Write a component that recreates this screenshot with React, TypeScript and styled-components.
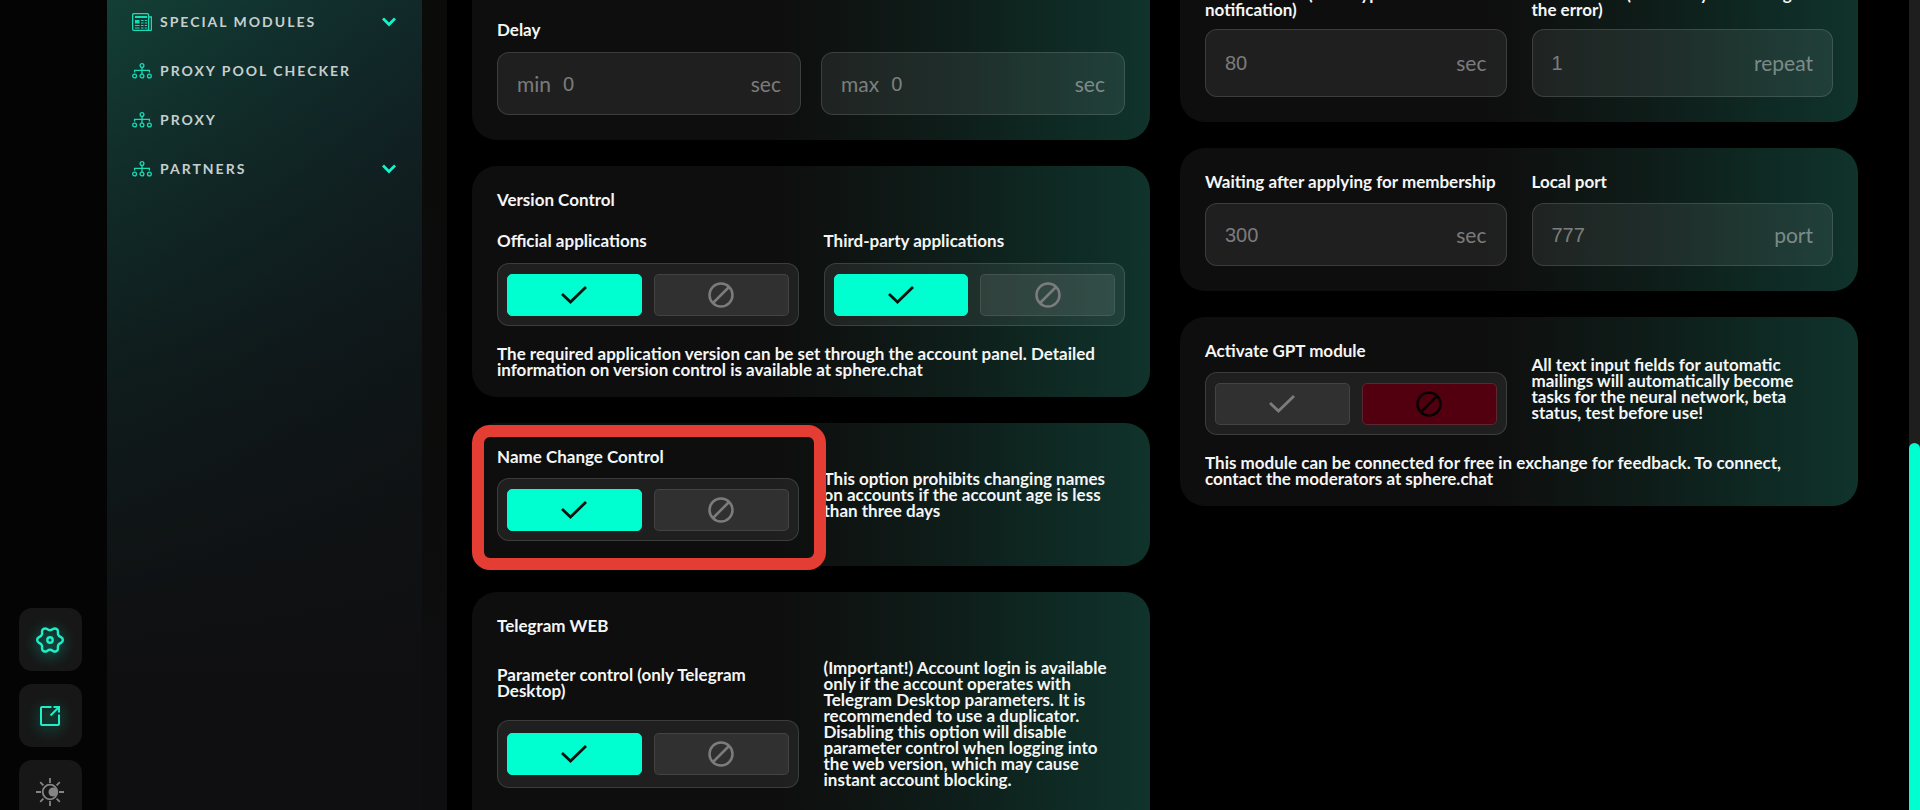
import React, { useId, useState } from 'react';
import styled, { createGlobalStyle, css } from 'styled-components';

const ACCENT = '#00ffd0';

const GlobalStyle = createGlobalStyle`
  *, *::before, *::after { box-sizing: border-box; }
  body { margin: 0; background: #000; color: #f4f6f6; font-family: Lato, "Liberation Sans", sans-serif; }
  button, input { font: inherit; color: inherit; }
  h2, h3, p, ul { margin: 0; padding: 0; }
`;

const Page = styled.div`
  display: flex;
  height: 100vh;
  overflow: hidden;
`;

const Rail = styled.aside`
  flex: 0 0 107px;
  display: flex;
  flex-direction: column;
  justify-content: flex-end;
  align-items: flex-start;
  gap: 13px;
  padding-left: 19px;
  margin-bottom: -13px;
  background: #040404;
`;

const RailButton = styled.button<{ $active?: boolean }>`
  flex: none;
  display: grid;
  place-items: center;
  width: 63px;
  height: 63px;
  padding: 0 1px 0 0;
  border: 0;
  border-radius: 13px;
  background: #171717;
  color: ${p => (p.$active ? '#1df0c8' : '#858585')};
  ${p =>
    p.$active &&
    css`
      svg {
        overflow: visible;
        filter: drop-shadow(0 3px 7px rgba(0, 255, 208, 0.6));
      }
    `}
`;

const Sidebar = styled.nav`
  flex: 0 0 340px;
  padding-right: 25px;
  background: linear-gradient(180deg, #0b0b0a 0%, #0c0c0c 60%, #0e0e10 85%);
`;

const Menu = styled.ul`
  height: 100%;
  list-style: none;
  background:
    linear-gradient(180deg, rgba(14, 14, 16, 0) 0%, rgba(14, 14, 16, 0.6) 45%, #0f0f11 84%),
    linear-gradient(112deg, #133f36 0%, #11312e 30%, #112628 55%, #101c1c 85%);
`;

const MenuLink = styled.a`
  display: flex;
  align-items: center;
  gap: 8px;
  height: 49px;
  padding: 0 26px 0 25px;
  color: #c6cece;
  font-size: 14px;
  font-weight: 700;
  letter-spacing: 2px;
  text-decoration: none;
  text-transform: uppercase;

  li:first-child > & { height: 46px; padding-bottom: 3px; }
  svg { flex: none; color: #17dcb5; }
  svg:last-child { color: #12f5cb; }
`;

const MenuText = styled.span`
  flex: 1;
`;

const Content = styled.main`
  flex: 1;
  min-width: 0;
  display: grid;
  grid-template-columns: repeat(2, minmax(0, 1fr));
  align-items: start;
  gap: 30px;
  padding: 0 51px 0 25px;
`;

const Column = styled.div<{ $scrolled: number }>`
  display: flex;
  flex-direction: column;
  gap: 26px;
  margin-top: -${p => p.$scrolled}px;
`;

const endPadding = { note: 19, field: 25, page: 50 };

const Card = styled.section<{ $end?: keyof typeof endPadding; $cut?: boolean }>`
  position: relative;
  padding: 26px 25px ${p => endPadding[p.$end ?? 'field']}px;
  border-radius: ${p => (p.$cut ? '0 0 25px 25px' : '25px')};
  background: linear-gradient(90deg, #0e0e0e 0%, #0e0e0e 45%, #0e1d19 70%, #0f2f28 94%, #10332b 100%);
`;

const Heading = styled.h2`
  margin-bottom: 25px;
  font-size: 17px;
  font-weight: 700;
  line-height: 16px;
`;

const Label = styled.label<{ $gap?: number }>`
  display: block;
  margin-bottom: ${p => p.$gap ?? 14}px;
  font-size: 17px;
  font-weight: 700;
  line-height: 16px;
`;

const Note = styled.p<{ $below?: boolean }>`
  margin-top: ${p => (p.$below ? 20 : 0)}px;
  font-size: 17px;
  font-weight: 700;
  line-height: 16px;
`;

const Pair = styled.div<{ $gap?: number }>`
  display: grid;
  grid-template-columns: repeat(2, minmax(0, 1fr));
  align-items: center;
  gap: ${p => p.$gap ?? 25}px;
`;

const Spaced = styled.div`
  padding-top: 8px;
`;

const Box = styled.div<{ $tall?: boolean }>`
  display: flex;
  align-items: center;
  height: ${p => (p.$tall ? 68 : 63)}px;
  padding: 0 19px;
  border: 1px solid rgba(255, 255, 255, 0.13);
  border-radius: 12px;
  background: rgba(255, 255, 255, 0.075);
  color: rgba(255, 255, 255, 0.42);
  font-size: 21px;
  line-height: 24px;
`;

const Prefix = styled.label`
  margin-right: 12px;
`;

const NumberInput = styled.input`
  flex: 1;
  min-width: 0;
  padding: 0;
  border: 0;
  outline: 0;
  background: none;
  font-family: 'Liberation Sans', sans-serif;
  font-size: 20px;
  &::placeholder { color: rgba(255, 255, 255, 0.42); opacity: 1; }
`;

const ToggleBox = styled(Box)`
  gap: 12px;
  padding: 0 9px;
`;

const tones = {
  idle: css`background: rgba(255, 255, 255, 0.08); border-color: rgba(255, 255, 255, 0.09); color: #7c7c7d;`,
  yes: css`background: ${ACCENT}; border-color: ${ACCENT}; color: #041310;`,
  no: css`background: #52000f; border-color: #5b2730; color: #080002;`,
};

const ToggleButton = styled.button<{ $tone: keyof typeof tones }>`
  flex: 1;
  display: grid;
  place-items: center;
  height: 42px;
  padding: 0;
  border: 1px solid;
  border-radius: 5px;
  ${p => tones[p.$tone]}
`;

const Highlight = styled.div`
  position: absolute;
  top: 2px;
  left: 0;
  width: calc(50% + 15px);
  height: 145px;
  border: 12px solid #e33d34;
  border-radius: 18px;
  pointer-events: none;
`;

const ScrollTrack = styled.div`
  flex: 0 0 11px;
  display: flex;
  flex-direction: column;
  justify-content: flex-end;
  background: #1e1e1f;
`;

const ScrollThumb = styled.div`
  height: 45.3%;
  border-radius: 6px 6px 0 0;
  background: ${ACCENT};
`;

const polar = (deg: number, r: number) => {
  const a = (deg * Math.PI) / 180;
  return [14 + r * Math.cos(a), 14 + r * Math.sin(a)];
};

// Six-lobed outline, smoothed by running each curve through the edge midpoints.
const gearPath = (() => {
  const pts: number[][] = [];
  for (let a = 0; a < 360; a += 60) pts.push(polar(a - 9, 13), polar(a + 9, 13), polar(a + 22, 9.8), polar(a + 38, 9.8));
  const mid = (i: number) => {
    const p = pts[i % pts.length];
    const q = pts[(i + 1) % pts.length];
    return `${((p[0] + q[0]) / 2).toFixed(2)} ${((p[1] + q[1]) / 2).toFixed(2)}`;
  };
  return `M${mid(pts.length - 1)}` + pts.map((p, i) => `Q${p[0].toFixed(2)} ${p[1].toFixed(2)} ${mid(i)}`).join('') + 'Z';
})();

const GearIcon = () => (
  <svg width="28" height="28" viewBox="0 0 28 28" fill="none" stroke="currentColor" strokeWidth="2.4">
    <path d={gearPath} strokeLinejoin="round" />
    <circle cx="14" cy="14" r="2.7" />
  </svg>
);

const OpenIcon = () => (
  <svg width="20" height="20" viewBox="0 0 20 20" fill="none" stroke="currentColor" strokeWidth="2">
    <path d="M11.5 1H2a1 1 0 0 0-1 1v16a1 1 0 0 0 1 1h16a1 1 0 0 0 1-1V8.5" />
    <path d="M10.5 9.5 18.5 1.5M13.5 1H19v5.5" />
  </svg>
);

const ThemeIcon = () => (
  <svg width="28" height="28" viewBox="0 0 28 28" fill="none" stroke="currentColor" strokeWidth="1.8">
    <circle cx="14" cy="14" r="7.3" />
    <circle cx="17" cy="14" r="4.5" fill="currentColor" stroke="none" />
    <path d="M14 0v5M14 23v5M0 14h5M23 14h5M4.2 4.2l3.2 3.2M20.6 20.6l3.2 3.2M4.2 23.8l3.2-3.2M20.6 7.4l3.2-3.2" />
  </svg>
);

const NewsIcon = () => (
  <svg width="20" height="18" viewBox="0 0 20 18" fill="none" stroke="currentColor">
    <rect x=".6" y=".6" width="16" height="16.8" rx="1.5" strokeWidth="1.3" />
    <path d="M17 4h2.4v12.4a1 1 0 0 1-1 1H15" strokeWidth="1.3" />
    <rect x="3" y="3" width="12" height="2" fill="currentColor" stroke="none" />
    <rect x="3" y="7" width="4.5" height="3.5" fill="currentColor" stroke="none" />
    <path d="M9 7.5h2.5M12.7 7.5H15M9 10h2.5M12.7 10H15M3 12.5h4.5M9 12.5h2.5M12.7 12.5H15M3 15h4.5M9 15h2.5M12.7 15H15" />
  </svg>
);

const NetworkIcon = () => (
  <svg width="20" height="16" viewBox="0 0 20 16" fill="none" stroke="currentColor" strokeWidth="1.3">
    <circle cx="10" cy="2.6" r="1.9" />
    <circle cx="2.6" cy="13" r="1.9" />
    <circle cx="10" cy="13" r="1.9" />
    <circle cx="17.4" cy="13" r="1.9" />
    <path d="M10 4.6V11M2.6 9.5V7.4h14.8v2.1" />
  </svg>
);

const ChevronIcon = () => (
  <svg width="14" height="10" viewBox="0 0 14 10" fill="none" stroke="currentColor" strokeWidth="2.7">
    <path d="M1 1.5 7 7.5 13 1.5" />
  </svg>
);

const CheckIcon = () => (
  <svg width="26" height="18" viewBox="0 0 26 18" fill="none" stroke="currentColor" strokeWidth="2.8">
    <path d="M1 8 9.5 16 25 1" />
  </svg>
);

const BanIcon = () => (
  <svg width="26" height="26" viewBox="0 0 26 26" fill="none" stroke="currentColor" strokeWidth="2.5">
    <circle cx="13" cy="13" r="11.5" />
    <path d="M5 21 21 5" />
  </svg>
);

type FieldProps = { label: string; placeholder: string; unit: string; labelGap?: number; tall?: boolean };

function Field({ label, placeholder, unit, labelGap = 13, tall }: FieldProps) {
  const id = useId();
  return (
    <div>
      <Label htmlFor={id} $gap={labelGap}>{label}</Label>
      <Box $tall={tall}>
        <NumberInput id={id} placeholder={placeholder} />
        <span>{unit}</span>
      </Box>
    </div>
  );
}

function BoundField({ bound }: { bound: string }) {
  const id = useId();
  return (
    <Box>
      <Prefix htmlFor={id}>{bound}</Prefix>
      <NumberInput id={id} placeholder="0" />
      <span>sec</span>
    </Box>
  );
}

type ToggleProps = { label: string; initial?: boolean; labelGap?: number; tall?: boolean };

function Toggle({ label, initial = true, labelGap, tall }: ToggleProps) {
  const id = useId();
  const [on, setOn] = useState(initial);
  return (
    <div>
      <Label as="h3" id={id} $gap={labelGap}>{label}</Label>
      <ToggleBox role="group" aria-labelledby={id} $tall={tall}>
        <ToggleButton type="button" aria-label="Enable" aria-pressed={on} $tone={on ? 'yes' : 'idle'} onClick={() => setOn(true)}>
          <CheckIcon />
        </ToggleButton>
        <ToggleButton type="button" aria-label="Disable" aria-pressed={!on} $tone={on ? 'idle' : 'no'} onClick={() => setOn(false)}>
          <BanIcon />
        </ToggleButton>
      </ToggleBox>
    </div>
  );
}

const menu = [
  { text: 'Special modules', icon: <NewsIcon />, nested: true },
  { text: 'Proxy pool checker', icon: <NetworkIcon />, nested: false },
  { text: 'Proxy', icon: <NetworkIcon />, nested: false },
  { text: 'Partners', icon: <NetworkIcon />, nested: true },
];

export default function App() {
  return (
    <Page>
      <GlobalStyle />
      <Rail>
        <RailButton type="button" aria-label="Settings" $active><GearIcon /></RailButton>
        <RailButton type="button" aria-label="Open in new window" $active><OpenIcon /></RailButton>
        <RailButton type="button" aria-label="Theme"><ThemeIcon /></RailButton>
      </Rail>

      <Sidebar>
        <Menu>
          {menu.map(item => (
            <li key={item.text}>
              <MenuLink href="#">
                {item.icon}
                <MenuText>{item.text}</MenuText>
                {item.nested && <ChevronIcon />}
              </MenuLink>
            </li>
          ))}
        </Menu>
      </Sidebar>

      <Content>
        <Column $scrolled={4}>
          <Card $cut>
            <Label as="h3">Delay</Label>
            <Pair $gap={20}>
              <BoundField bound="min" />
              <BoundField bound="max" />
            </Pair>
          </Card>

          <Card $end="note">
            <Heading>Version Control</Heading>
            <Pair>
              <Toggle label="Official applications" />
              <Toggle label="Third-party applications" />
            </Pair>
            <Note $below>
              The required application version can be set through the account panel. Detailed information on version
              control is available at sphere.chat
            </Note>
          </Card>

          <Card>
            <Pair>
              <Toggle label="Name Change Control" labelGap={13} />
              <Note>This option prohibits changing names on accounts if the account age is less than three days</Note>
            </Pair>
            <Highlight />
          </Card>

          <Card $end="page">
            <Heading>Telegram WEB</Heading>
            <Pair>
              <Spaced>
                <Toggle label="Parameter control (only Telegram Desktop)" labelGap={21} tall />
              </Spaced>
              <Note>
                (Important!) Account login is available only if the account operates with Telegram Desktop parameters.
                It is recommended to use a duplicator. Disabling this option will disable parameter control when
                logging into the web version, which may cause instant account blocking.
              </Note>
            </Pair>
          </Card>
        </Column>

        <Column $scrolled={40}>
          <Card $cut>
            <Pair>
              <Field label="Error interval (auto bypass on limit notification)" placeholder="80" unit="sec" labelGap={11} tall />
              <Field label="Error retries (how many times to ignore the error)" placeholder="1" unit="repeat" labelGap={11} tall />
            </Pair>
          </Card>

          <Card>
            <Pair>
              <Field label="Waiting after applying for membership" placeholder="300" unit="sec" />
              <Field label="Local port" placeholder="777" unit="port" />
            </Pair>
          </Card>

          <Card $end="note">
            <Pair>
              <Toggle label="Activate GPT module" initial={false} labelGap={13} />
              <Note>
                All text input fields for automatic mailings will automatically become tasks for the neural network,
                beta status, test before use!
              </Note>
            </Pair>
            <Note $below>
              This module can be connected for free in exchange for feedback. To connect, contact the moderators at
              sphere.chat
            </Note>
          </Card>
        </Column>
      </Content>

      <ScrollTrack>
        <ScrollThumb />
      </ScrollTrack>
    </Page>
  );
}
